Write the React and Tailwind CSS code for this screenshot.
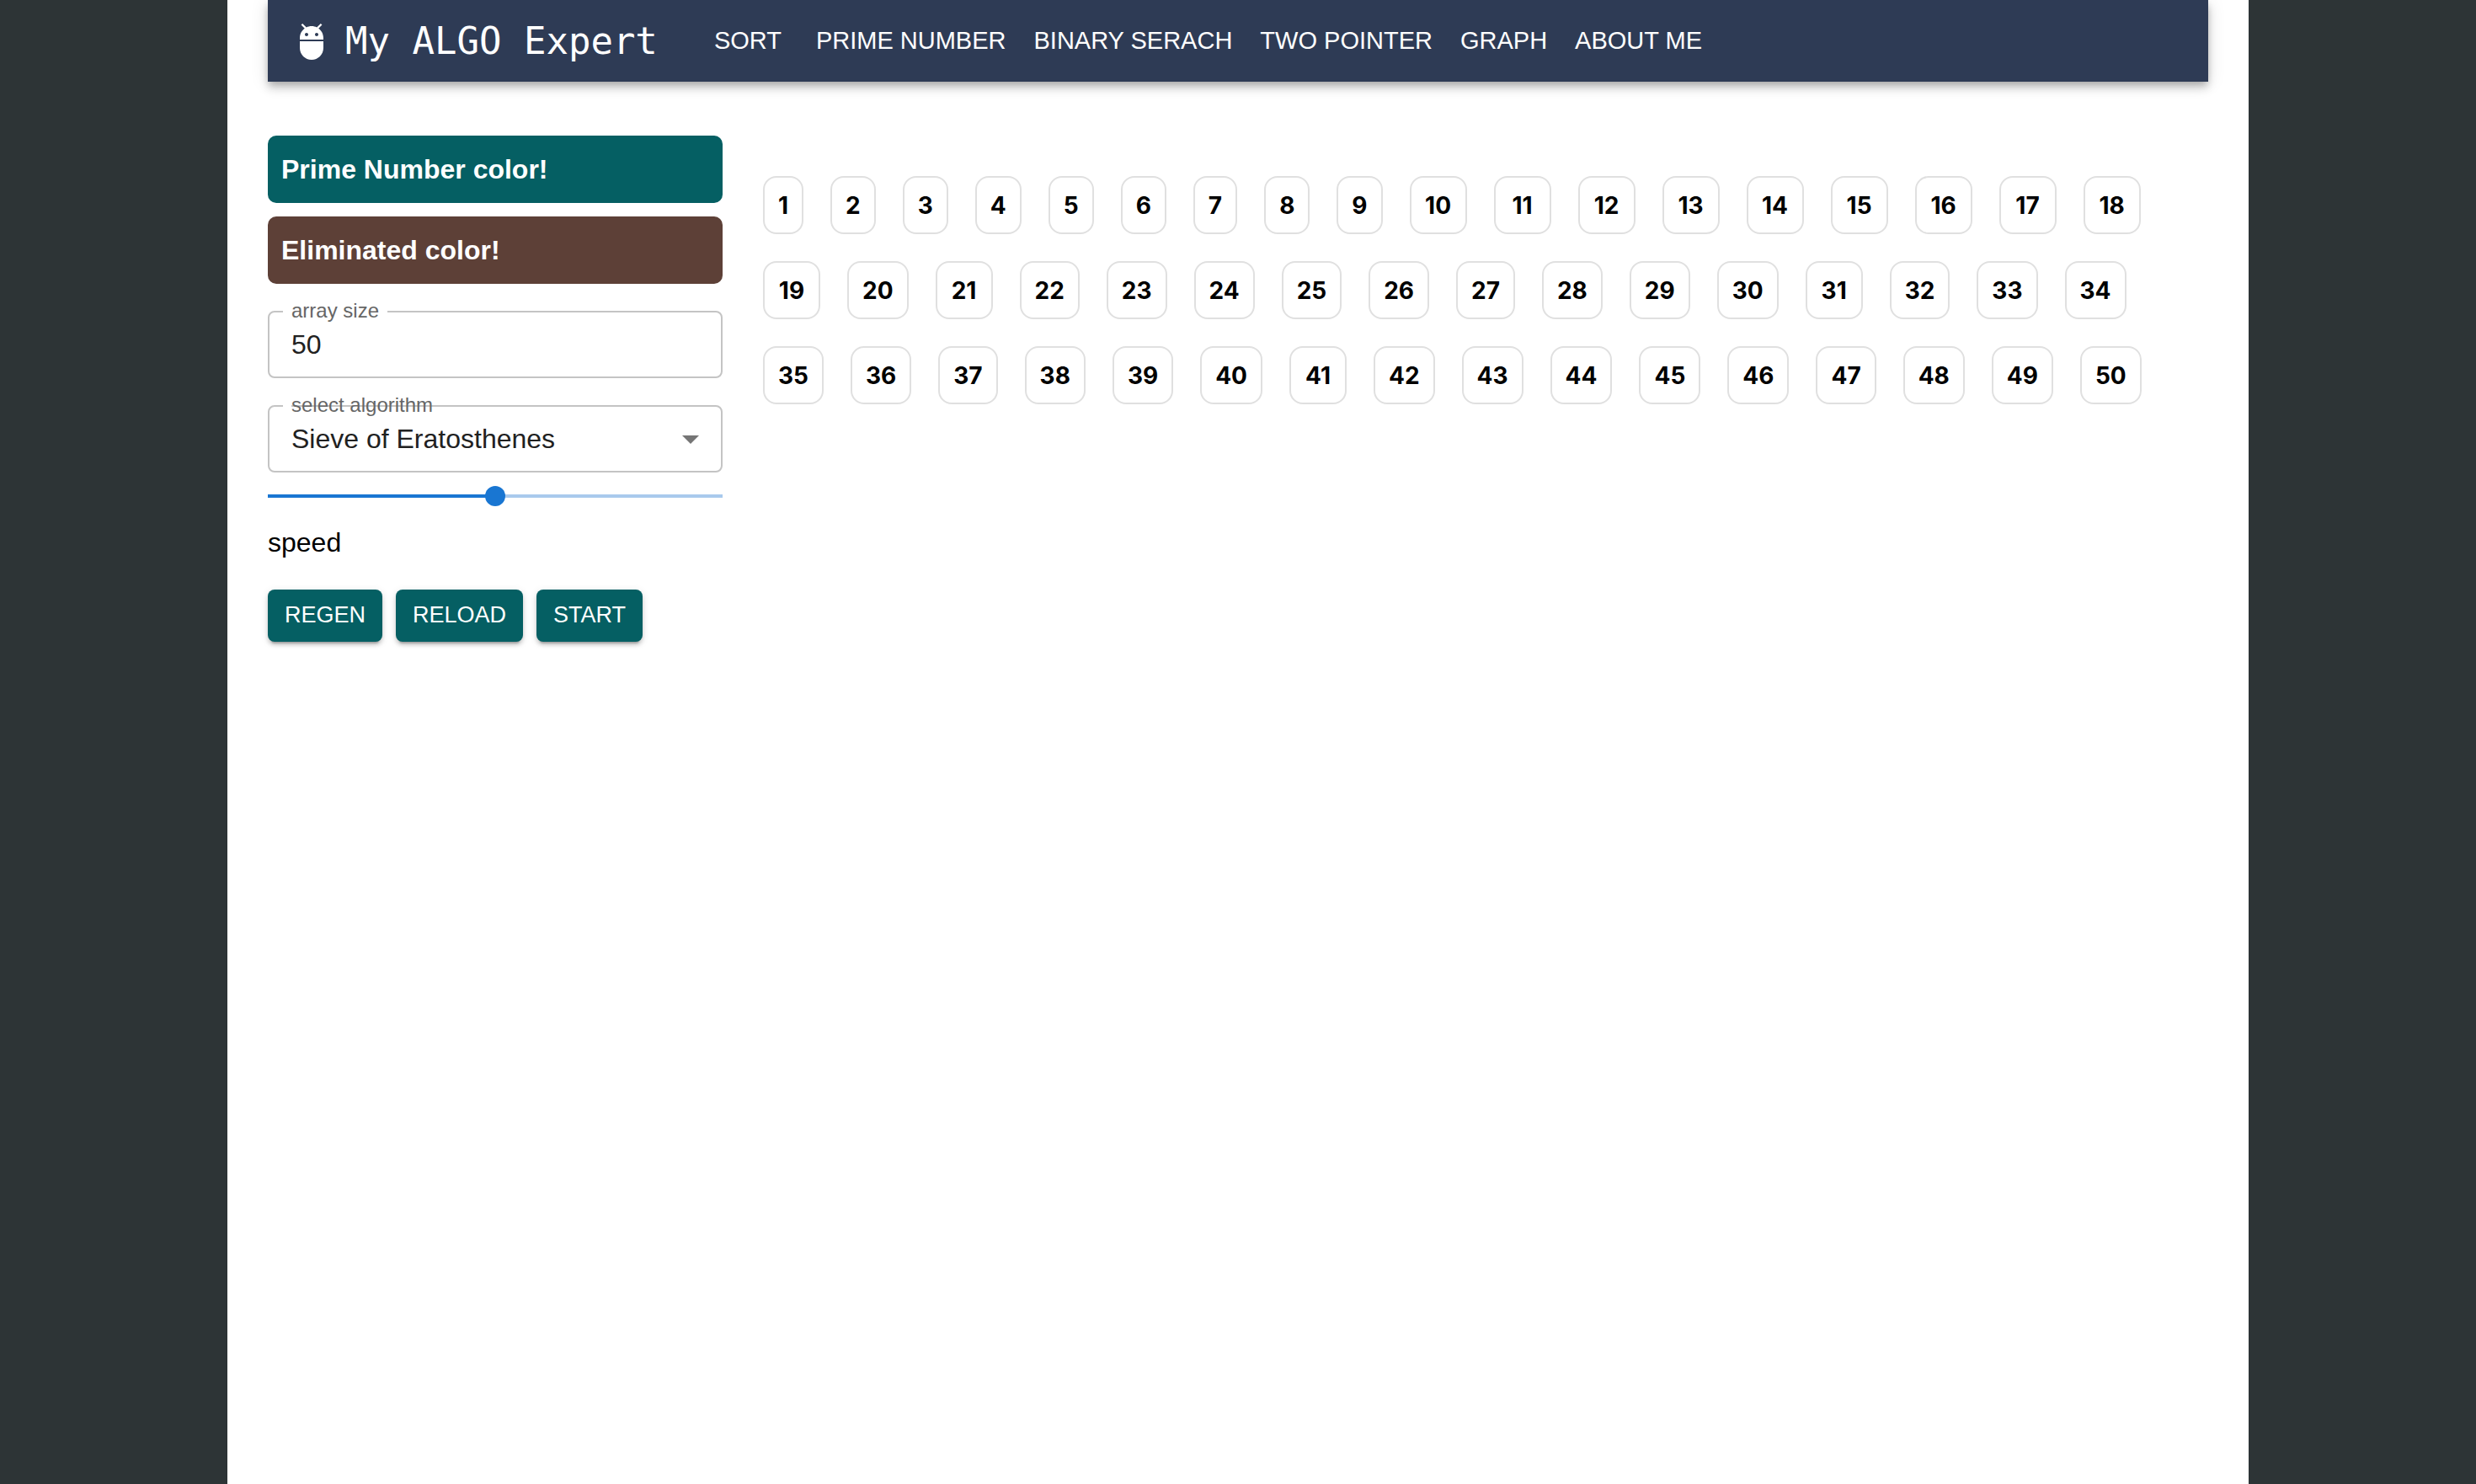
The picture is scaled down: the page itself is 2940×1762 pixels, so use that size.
import { useState } from "react";
import { MdAdb, MdArrowDropDown } from "react-icons/md";

const links = ["SORT", "PRIME NUMBER", "BINARY SERACH", "TWO POINTER", "GRAPH", "ABOUT ME"];
const algorithms = ["Sieve of Eratosthenes", "Brute Force"];
const actions = ["REGEN", "RELOAD", "START"];

function NavBar() {
  return (
    <header className="flex h-[97px] items-center bg-[#2e3b55] px-7 text-white shadow-[0_4px_8px_-2px_rgba(0,0,0,0.2),0_8px_10px_rgba(0,0,0,0.14),0_2px_20px_rgba(0,0,0,0.12)]">
      <a href="#home" className="flex items-center gap-4">
        <MdAdb className="size-12" aria-hidden="true" />
        <span className="font-['DejaVu_Sans_Mono',monospace] text-[44px] leading-[64px]">My ALGO Expert</span>
      </a>
      <nav className="ml-[67px] flex items-center gap-[33px] pb-0.5 text-[29px] leading-[48px]">
        {links.map((label) => (
          <a key={label} href="#" className="first:mr-2">
            {label}
          </a>
        ))}
      </nav>
    </header>
  );
}

function Legend({ className, children }) {
  return <p className={`rounded-[10px] px-4 py-4 text-[32px] leading-[48px] font-bold text-white ${className}`}>{children}</p>;
}

function Controls() {
  const [size, setSize] = useState("50");
  const [speed, setSpeed] = useState(50);
  return (
    <section className="flex w-[540px] shrink-0 flex-col">
      <Legend className="bg-[#055f63]">Prime Number color!</Legend>
      <Legend className="mt-4 bg-[#5d4037]">Eliminated color!</Legend>

      <div className="relative mt-8 text-[#212121]">
        <label htmlFor="size" className="absolute -top-3 left-[18px] bg-white px-[10px] text-2xl leading-6 text-[#666]">
          array size
        </label>
        <input
          id="size"
          type="text"
          value={size}
          onChange={(e) => setSize(e.target.value)}
          className="block h-20 w-full rounded-lg border-2 border-[#c4c4c4] px-[26px] text-[32px]"
        />
      </div>

      <div className="relative mt-8 text-[#212121]">
        {/* Narrow notch: the outline breaks only before the label and runs behind its text. */}
        <span aria-hidden="true" className="absolute top-0 left-[18px] h-0.5 w-[10px] bg-white" />
        <label htmlFor="algorithm" className="absolute -top-3 left-[28px] text-2xl leading-6 text-[#666]">
          select algorithm
        </label>
        <select
          id="algorithm"
          className="block h-20 w-full appearance-none rounded-lg border-2 border-[#c4c4c4] bg-transparent px-[26px] text-[32px]"
        >
          {algorithms.map((name) => (
            <option key={name}>{name}</option>
          ))}
        </select>
        <MdArrowDropDown aria-hidden="true" className="pointer-events-none absolute top-4 right-[14px] size-12 text-[#757575]" />
      </div>

      <div className="mt-4 flex flex-col">
        <input
          id="speed"
          type="range"
          value={speed}
          onChange={(e) => setSpeed(Number(e.target.value))}
          style={{ "--fill": `${speed}%` }}
          className="h-6 w-full appearance-none bg-[linear-gradient(to_right,#1976d2_var(--fill),#a9caed_var(--fill))] bg-[length:100%_4px] bg-center bg-no-repeat [&::-webkit-slider-thumb]:size-6 [&::-webkit-slider-thumb]:appearance-none [&::-webkit-slider-thumb]:rounded-full [&::-webkit-slider-thumb]:bg-[#1976d2]"
        />
        <label htmlFor="speed" className="mt-[19px] text-[32px] leading-[48px] text-black">
          speed
        </label>
      </div>

      <div className="mt-8 flex gap-4">
        {actions.map((name) => (
          <button
            key={name}
            type="button"
            className="h-[62px] rounded-lg bg-[#055f63] px-5 pb-0.5 text-[27px] text-white shadow-[0_6px_2px_-4px_rgba(0,0,0,0.2),0_4px_4px_rgba(0,0,0,0.14),0_2px_10px_rgba(0,0,0,0.12)]"
          >
            {name}
          </button>
        ))}
      </div>
    </section>
  );
}

function NumberGrid() {
  return (
    <ul className="mt-12 flex min-w-0 flex-1 flex-wrap content-start gap-8 font-['Inter',sans-serif] text-[28px] leading-[33px] font-bold text-black">
      {Array.from({ length: 50 }, (_, i) => i + 1).map((n) => (
        <li
          key={n}
          className={`rounded-2xl border-2 border-[#e0e0e0] px-4 pt-[17px] pb-[15px] text-center ${n > 9 ? "min-w-17" : ""}`}
        >
          {n}
        </li>
      ))}
    </ul>
  );
}

export default function App() {
  return (
    <div className="min-h-screen bg-[#2d3436] font-['Liberation_Sans',Arial,sans-serif]">
      <div className="mx-auto min-h-screen max-w-[2400px] bg-white px-12">
        <NavBar />
        <main className="mt-16 flex gap-12">
          <Controls />
          <NumberGrid />
        </main>
      </div>
    </div>
  );
}
